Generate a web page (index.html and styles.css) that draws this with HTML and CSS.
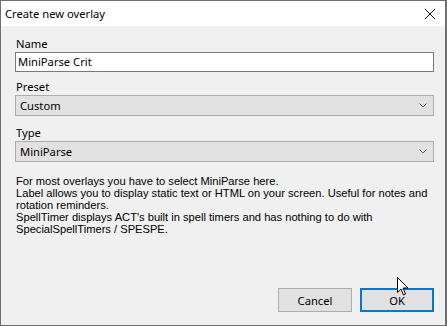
FILE: index.html
```html
<!DOCTYPE html>
<html lang="en">
<head>
    <meta charset="UTF-8">
    <title>Create new overlay</title>
    <link rel="stylesheet" href="styles.css">
</head>
<body>
    <div class="window">
        <div class="titlebar">
            <span class="title">Create new overlay</span>
            <svg class="close" width="12" height="12" viewBox="0 0 12 12">
                <path d="M1 1 L11 11 M11 1 L1 11" stroke="#111" stroke-width="1" fill="none"/>
            </svg>
        </div>

        <div class="content">
            <label class="field-label" for="name">Name</label>
            <div class="textbox" id="name">MiniParse Crit</div>

            <label class="field-label">Preset</label>
            <div class="combo">
                <span>Custom</span>
                <svg class="chevron" width="8" height="5" viewBox="0 0 8 5">
                    <path d="M0.5 0.5 L4 4 L7.5 0.5" stroke="#606060" stroke-width="1" fill="none"/>
                </svg>
            </div>

            <label class="field-label">Type</label>
            <div class="combo">
                <span>MiniParse</span>
                <svg class="chevron" width="8" height="5" viewBox="0 0 8 5">
                    <path d="M0.5 0.5 L4 4 L7.5 0.5" stroke="#606060" stroke-width="1" fill="none"/>
                </svg>
            </div>

            <p class="help">For most overlays you have to select MiniParse here.<br>Label allows you to display static text or HTML on your screen. Useful for notes and rotation reminders.<br>SpellTimer displays ACT's built in spell timers and has nothing to do with SpecialSpellTimers / SPESPE.</p>

            <div class="buttons">
                <button class="btn">Cancel</button>
                <button class="btn btn-default">OK</button>
            </div>
        </div>

        <!-- mouse pointer hovering the OK button -->
        <svg class="pointer" width="12" height="19" viewBox="0 0 12 19">
            <path d="M0.5 0.5 L0.5 15.5 L4 12 L6.5 18 L8.5 17 L6 11 L11 11 Z" fill="#fff" stroke="#000" stroke-width="1"/>
        </svg>
    </div>
</body>
</html>
```

FILE: styles.css
```css
body {
    margin: 0;
    background-color: #f0f0f0;
}
.window {
    position: relative;
    width: 447px;
    height: 326px;
    box-sizing: border-box;
    border: 1px solid #6e6e6e;
    border-right-width: 2px;
    background-color: #f0f0f0;
    display: flex;
    flex-direction: column;
    overflow: hidden;
}
.titlebar {
    height: 25px;
    background-color: #fff;
    display: flex;
    align-items: center;
    justify-content: space-between;
    padding: 0 9px 0 4px;
}
.title {
    font-family: "Noto Sans", "Open Sans", sans-serif;
    font-size: 11.2px;
    color: #000;
}
.close {
    display: block;
}
.content {
    flex: 1;
    display: flex;
    flex-direction: column;
    padding: 10px 11px 13px 14px;
}
.field-label {
    font-family: "Noto Sans", "Open Sans", sans-serif;
    font-size: 11.2px;
    line-height: 15px;
    height: 15px;
    padding-left: 1px;
    color: #000;
    margin-bottom: 1px;
}
.textbox {
    height: 20px;
    box-sizing: border-box;
    border: 1px solid #7a7a7a;
    background-color: #fff;
    font-family: "Noto Sans", "Open Sans", sans-serif;
    font-size: 11.2px;
    line-height: 18px;
    padding-left: 2px;
    margin-bottom: 7px;
}
.combo {
    height: 21px;
    box-sizing: border-box;
    border: 1px solid #adadad;
    background-color: #e1e1e1;
    display: flex;
    align-items: center;
    justify-content: space-between;
    font-family: "Noto Sans", "Open Sans", sans-serif;
    font-size: 11.2px;
    padding: 0 6px 0 4px;
    margin-bottom: 9px;
}
.chevron {
    display: block;
}
.help {
    margin: 4px 0 0 0;
    padding-left: 1px;
    font-family: "Liberation Sans", Arial, sans-serif;
    font-size: 11.15px;
    line-height: 12px;
    color: #000;
}
.buttons {
    margin-top: auto;
    display: flex;
    justify-content: flex-end;
    gap: 8px;
}
.btn {
    width: 74px;
    height: 24px;
    box-sizing: border-box;
    border: 1px solid #adadad;
    background-color: #e1e1e1;
    font-family: "Noto Sans", "Open Sans", sans-serif;
    font-size: 11.2px;
    color: #000;
    padding: 0;
}
.btn-default {
    border: 2px solid #0078d7;
}
.pointer {
    position: absolute;
    left: 396px;
    top: 276px;
}
```
